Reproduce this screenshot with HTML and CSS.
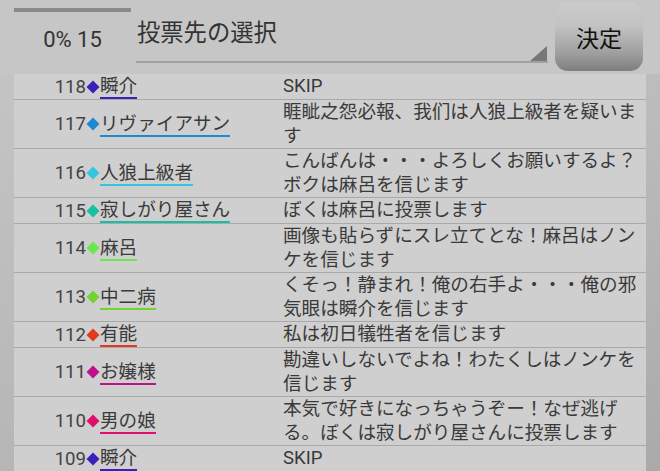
FILE: index.html
```html
<!DOCTYPE html>
<html lang="ja">
<head>
<meta charset="utf-8">
<title>投票先の選択</title>
<link rel="stylesheet" href="styles.css">
</head>
<body>
<div class="screen">
  <header class="header">
    <div class="status">
      <div class="progress"></div>
      <div class="count">0% 15</div>
    </div>
    <div class="spinner">
      <span class="spinner-text">投票先の選択</span>
      <span class="spinner-arrow"></span>
    </div>
    <div class="decide">決定</div>
  </header>
  <div class="list-wrap">
    <div class="edge-left"></div>
    <div class="list">
      <div class="row">
        <div class="who"><span class="num">118</span><svg class="dia c-shun" viewBox="0 0 14 14"><polygon points="7,0.5 13.5,7 7,13.5 0.5,7"/></svg><span class="name u-shun">瞬介</span></div>
        <div class="msg">SKIP</div>
      </div>
      <div class="row">
        <div class="who"><span class="num">117</span><svg class="dia c-levi" viewBox="0 0 14 14"><polygon points="7,0.5 13.5,7 7,13.5 0.5,7"/></svg><span class="name u-levi">リヴァイアサン</span></div>
        <div class="msg">睚眦之怨必報、我们は人狼上級者を疑います</div>
      </div>
      <div class="row">
        <div class="who"><span class="num">116</span><svg class="dia c-jin" viewBox="0 0 14 14"><polygon points="7,0.5 13.5,7 7,13.5 0.5,7"/></svg><span class="name u-jin">人狼上級者</span></div>
        <div class="msg">こんばんは・・・よろしくお願いするよ？ボクは麻呂を信じます</div>
      </div>
      <div class="row">
        <div class="who"><span class="num">115</span><svg class="dia c-sabi" viewBox="0 0 14 14"><polygon points="7,0.5 13.5,7 7,13.5 0.5,7"/></svg><span class="name u-sabi">寂しがり屋さん</span></div>
        <div class="msg">ぼくは麻呂に投票します</div>
      </div>
      <div class="row">
        <div class="who"><span class="num">114</span><svg class="dia c-maro" viewBox="0 0 14 14"><polygon points="7,0.5 13.5,7 7,13.5 0.5,7"/></svg><span class="name u-maro">麻呂</span></div>
        <div class="msg">画像も貼らずにスレ立てとな！麻呂はノンケを信じます</div>
      </div>
      <div class="row">
        <div class="who"><span class="num">113</span><svg class="dia c-chu" viewBox="0 0 14 14"><polygon points="7,0.5 13.5,7 7,13.5 0.5,7"/></svg><span class="name u-chu">中二病</span></div>
        <div class="msg">くそっ！静まれ！俺の右手よ・・・俺の邪気眼は瞬介を信じます</div>
      </div>
      <div class="row">
        <div class="who"><span class="num">112</span><svg class="dia c-yuu" viewBox="0 0 14 14"><polygon points="7,0.5 13.5,7 7,13.5 0.5,7"/></svg><span class="name u-yuu">有能</span></div>
        <div class="msg">私は初日犠牲者を信じます</div>
      </div>
      <div class="row">
        <div class="who"><span class="num">111</span><svg class="dia c-ojou" viewBox="0 0 14 14"><polygon points="7,0.5 13.5,7 7,13.5 0.5,7"/></svg><span class="name u-ojou">お嬢様</span></div>
        <div class="msg">勘違いしないでよね！わたくしはノンケを信じます</div>
      </div>
      <div class="row">
        <div class="who"><span class="num">110</span><svg class="dia c-otoko" viewBox="0 0 14 14"><polygon points="7,0.5 13.5,7 7,13.5 0.5,7"/></svg><span class="name u-otoko">男の娘</span></div>
        <div class="msg">本気で好きになっちゃうぞー！なぜ逃げる。ぼくは寂しがり屋さんに投票します</div>
      </div>
      <div class="row">
        <div class="who"><span class="num">109</span><svg class="dia c-shun" viewBox="0 0 14 14"><polygon points="7,0.5 13.5,7 7,13.5 0.5,7"/></svg><span class="name u-shun">瞬介</span></div>
        <div class="msg">SKIP</div>
      </div>
    </div>
    <div class="edge-right"></div>
  </div>
</div>
</body>
</html>
```

FILE: styles.css
```css
html, body {
  margin: 0;
  padding: 0;
}
body {
  width: 660px;
  height: 471px;
  overflow: hidden;
  background: #c6c6c6;
  font-family: Roboto, "Noto Sans CJK JP", sans-serif;
  color: #3a3a3a;
}
.screen {
  width: 660px;
  height: 471px;
  display: flex;
  flex-direction: column;
}
.header {
  height: 74px;
  display: flex;
  flex-shrink: 0;
}
.status {
  margin-left: 14px;
  width: 117px;
  display: flex;
  flex-direction: column;
}
.progress {
  margin-top: 8px;
  height: 4px;
  background: #8a8a8a;
}
.count {
  margin-top: 13px;
  font-size: 22px;
  line-height: 30px;
  text-align: center;
  color: #333;
}
.spinner {
  margin-left: 5px;
  width: 412px;
  height: 61px;
  border-bottom: 2px solid #a0a0a0;
  display: flex;
}
.spinner-text {
  flex: 1;
  padding-top: 18px;
  padding-left: 1px;
  font-size: 23.3px;
  line-height: 30px;
  color: #333;
}
.spinner-arrow {
  align-self: flex-end;
  width: 0;
  height: 0;
  border-left: 17px solid transparent;
  border-bottom: 15px solid #777;
  margin-right: 1px;
}
.decide {
  margin-left: 7px;
  margin-top: 2px;
  width: 88px;
  height: 69px;
  border-radius: 13px;
  background: linear-gradient(to bottom, #cbcbcb 0%, #c2c2c2 35%, #9e9e9e 75%, #7e7e7e 100%);
  display: flex;
  align-items: center;
  justify-content: center;
  font-size: 23px;
  color: #111;
}
.list-wrap {
  display: flex;
  flex: 1;
}
.edge-left {
  width: 14px;
  background: linear-gradient(to bottom, #c4c4c4, #b6b6b6);
}
.list {
  width: 632px;
  display: flex;
  flex-direction: column;
  align-self: flex-start;
}
.edge-right {
  width: 14px;
  background: linear-gradient(to bottom, #bdbdbd, #aaaaaa);
}
.row {
  display: flex;
  background: #cfcfcf;
  border-bottom: 1px solid #a9a9a9;
  font-size: 18.6px;
}
.who {
  width: 269px;
  flex-shrink: 0;
  display: flex;
  align-items: center;
}
.num {
  width: 72px;
  text-align: right;
  line-height: 24px;
  color: #444;
}
.dia {
  width: 14px;
  height: 14px;
  fill: currentColor;
}
.name {
  display: inline-block;
  line-height: 21px;
  margin-top: 2px;
  border-bottom: 2px solid;
  color: #3a3a3a;
}
.msg {
  flex: 1;
  line-height: 24px;
  padding-right: 8px;
}
.c-shun { color: #3a1fbd; }
.c-levi { color: #1e88d6; }
.c-jin { color: #34c6dc; }
.c-sabi { color: #16c0a2; }
.c-maro { color: #68e84a; }
.c-chu { color: #72d432; }
.c-yuu { color: #e03c1c; }
.c-ojou { color: #c0108c; }
.c-otoko { color: #e0106a; }
.u-shun { border-color: #3a1fbd; }
.u-levi { border-color: #1e88d6; }
.u-jin { border-color: #34c6dc; }
.u-sabi { border-color: #16c0a2; }
.u-maro { border-color: #68e84a; }
.u-chu { border-color: #72d432; }
.u-yuu { border-color: #e03c1c; }
.u-ojou { border-color: #c0108c; }
.u-otoko { border-color: #e0106a; }
```
